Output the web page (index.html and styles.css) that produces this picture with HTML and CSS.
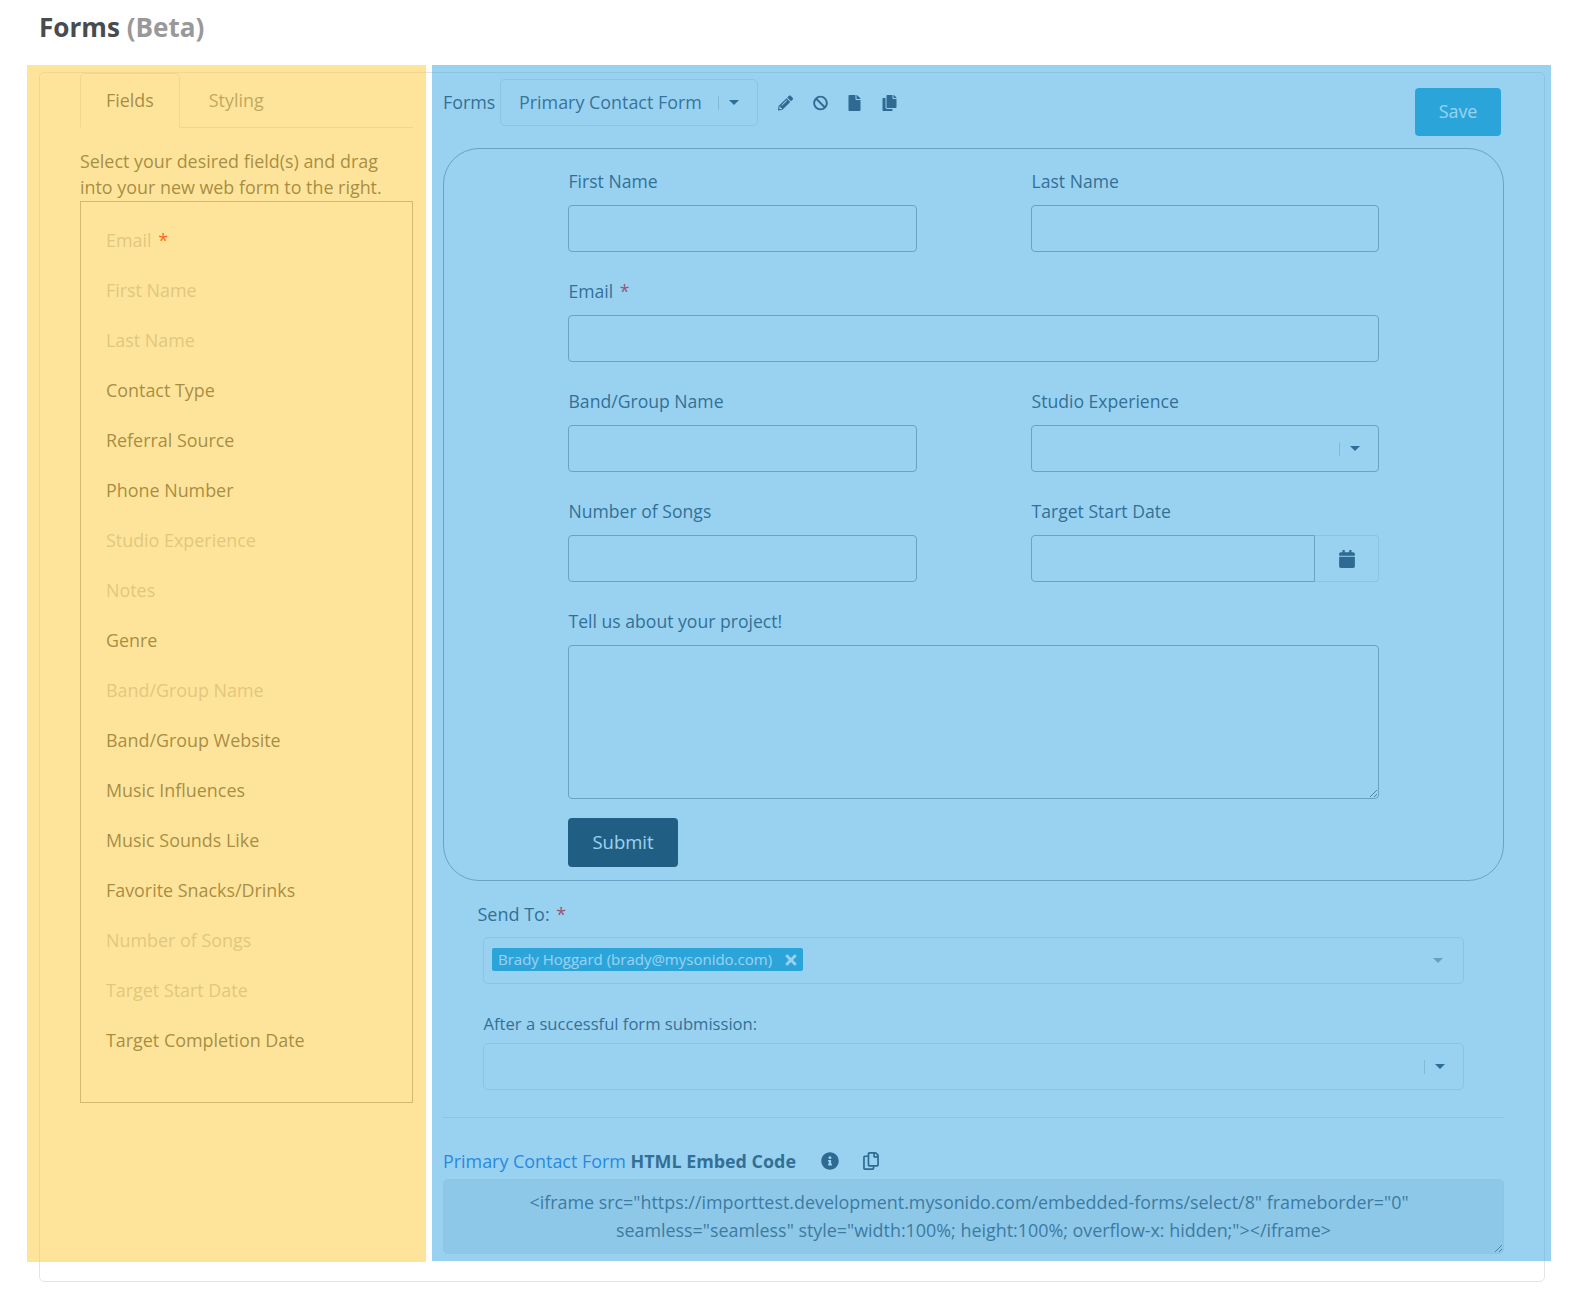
FILE: index.html
```html
<!DOCTYPE html>
<html lang="en">
<head>
<meta charset="utf-8">
<title>Forms (Beta)</title>
<link rel="stylesheet" href="styles.css">
</head>
<body>
<div class="page">
  <h1 class="title">Forms <span class="beta">(Beta)</span></h1>
  <div class="card">
    <aside class="side">
      <div class="tabs">
        <div class="tab active">Fields</div>
        <div class="tab">Styling</div>
      </div>
      <p class="hint">Select your desired field(s) and drag into your new web form to the right.</p>
      <ul class="fields">
        <li class="used">Email <span class="req">*</span></li>
        <li class="used">First Name</li>
        <li class="used">Last Name</li>
        <li>Contact Type</li>
        <li>Referral Source</li>
        <li>Phone Number</li>
        <li class="used">Studio Experience</li>
        <li class="used">Notes</li>
        <li>Genre</li>
        <li class="used">Band/Group Name</li>
        <li>Band/Group Website</li>
        <li>Music Influences</li>
        <li>Music Sounds Like</li>
        <li>Favorite Snacks/Drinks</li>
        <li class="used">Number of Songs</li>
        <li class="used">Target Start Date</li>
        <li>Target Completion Date</li>
      </ul>
    </aside>
    <main class="main">
      <div class="toolbar">
        <span class="toolbar-label">Forms</span>
        <div class="select form-picker">
          <span class="select-value">Primary Contact Form</span>
          <span class="select-sep"></span>
          <span class="caret"></span>
        </div>
        <div class="tools">
          <svg class="tool" viewBox="0 0 512 512"><path d="M497.9 142.1l-46.1 46.1c-4.7 4.7-12.3 4.7-17 0l-111-111c-4.7-4.7-4.7-12.3 0-17l46.1-46.1c18.7-18.7 49.1-18.7 67.9 0l60.1 60.1c18.8 18.7 18.8 49.1 0 67.9zM284.2 99.8L21.6 362.4.4 483.9c-2.9 16.4 11.4 30.6 27.8 27.8l121.5-21.3 262.6-262.6c4.7-4.7 4.7-12.3 0-17l-111-111c-4.8-4.7-12.4-4.7-17.1 0zM124.1 339.9c-5.5-5.5-5.5-14.3 0-19.8l154-154c5.5-5.5 14.3-5.5 19.8 0s5.5 14.3 0 19.8l-154 154c-5.5 5.5-14.3 5.5-19.8 0zM88 424h48v36.3l-64.5 11.3-31.1-31.1L51.7 376H88v48z"/></svg>
          <svg class="tool" viewBox="0 0 512 512"><path d="M256 8C119.034 8 8 119.033 8 256s111.034 248 248 248 248-111.034 248-248S392.967 8 256 8zm130.108 117.892c65.448 65.448 70 165.481 20.677 235.637L150.47 105.216c70.204-49.356 170.226-44.735 235.638 20.676zM125.892 386.108c-65.448-65.448-70-165.481-20.677-235.637L361.53 406.784c-70.203 49.356-170.226 44.736-235.638-20.676z"/></svg>
          <svg class="tool" viewBox="0 0 384 512"><path d="M224 136V0H24C10.7 0 0 10.7 0 24v464c0 13.3 10.7 24 24 24h336c13.3 0 24-10.7 24-24V160H248c-13.2 0-24-10.8-24-24zm160-14.1v6.1H256V0h6.1c6.4 0 12.5 2.5 17 7l97.9 98c4.5 4.5 7 10.6 7 16.9z"/></svg>
          <svg class="tool" viewBox="0 0 448 512"><path d="M320 448v40c0 13.255-10.745 24-24 24H24c-13.255 0-24-10.745-24-24V120c0-13.255 10.745-24 24-24h72v296c0 30.879 25.121 56 56 56h168zm0-344V0H152c-13.255 0-24 10.745-24 24v368c0 13.255 10.745 24 24 24h272c13.255 0 24-10.745 24-24V128H344c-13.2 0-24-10.8-24-24zm120.971-31.029L375.029 7.029A24 24 0 0 0 358.059 0H352v96h96v-6.059a24 24 0 0 0-7.029-16.97z"/></svg>
        </div>
        <button class="save" type="button">Save</button>
      </div>

      <div class="frame">
        <div class="form-grid">
          <div class="field">
            <label class="label">First Name</label>
            <input class="control" type="text">
          </div>
          <div class="field">
            <label class="label">Last Name</label>
            <input class="control" type="text">
          </div>
          <div class="field wide">
            <label class="label">Email <span class="req-dark">*</span></label>
            <input class="control" type="text">
          </div>
          <div class="field">
            <label class="label">Band/Group Name</label>
            <input class="control" type="text">
          </div>
          <div class="field">
            <label class="label">Studio Experience</label>
            <div class="select control-select">
              <span class="select-value"></span>
              <span class="select-sep"></span>
              <span class="caret"></span>
            </div>
          </div>
          <div class="field">
            <label class="label">Number of Songs</label>
            <input class="control" type="text">
          </div>
          <div class="field">
            <label class="label">Target Start Date</label>
            <div class="date">
              <input class="control date-input" type="text">
              <span class="addon">
                <svg class="calendar" viewBox="0 0 448 512"><path d="M12 192h424c6.6 0 12 5.4 12 12v260c0 26.5-21.5 48-48 48H48c-26.5 0-48-21.5-48-48V204c0-6.6 5.4-12 12-12zm436-44v-36c0-26.5-21.5-48-48-48h-48V12c0-6.6-5.4-12-12-12h-40c-6.6 0-12 5.4-12 12v52H160V12c0-6.6-5.4-12-12-12h-40c-6.6 0-12 5.4-12 12v52H48C21.5 64 0 85.5 0 112v36c0 6.6 5.4 12 12 12h424c6.6 0 12-5.4 12-12z"/></svg>
              </span>
            </div>
          </div>
          <div class="field wide">
            <label class="label">Tell us about your project!</label>
            <textarea class="control project"></textarea>
          </div>
        </div>
        <button class="submit" type="button">Submit</button>
      </div>

      <div class="send">
        <label class="label send-label">Send To: <span class="req-dark">*</span></label>
        <div class="select light tags">
          <span class="tag">Brady Hoggard (brady@mysonido.com)
            <svg class="tag-x" viewBox="0 0 352 512"><path d="M242.72 256l100.07-100.07c12.28-12.28 12.28-32.19 0-44.48l-22.24-22.24c-12.28-12.28-32.19-12.28-44.48 0L176 189.28 75.93 89.21c-12.28-12.28-32.19-12.28-44.48 0L9.21 111.45c-12.28 12.28-12.28 32.19 0 44.48L109.28 256 9.21 356.07c-12.28 12.28-12.28 32.19 0 44.48l22.24 22.24c12.28 12.28 32.2 12.28 44.48 0L176 322.72l100.07 100.07c12.28 12.28 32.2 12.28 44.48 0l22.24-22.24c12.28-12.28 12.28-32.19 0-44.48L242.72 256z"/></svg>
          </span>
          <span class="caret faint"></span>
        </div>
        <label class="after-label">After a successful form submission:</label>
        <div class="select light after">
          <span class="select-value"></span>
          <span class="select-sep"></span>
          <span class="caret"></span>
        </div>
      </div>

      <hr class="divider">

      <div class="embed-head">
        <span class="embed-title"><a class="embed-link">Primary Contact Form</a> <strong>HTML Embed Code</strong></span>
        <svg class="info" viewBox="0 0 512 512"><path d="M256 8C119.043 8 8 119.083 8 256c0 136.997 111.043 248 248 248s248-111.003 248-248C504 119.083 392.957 8 256 8zm0 110c23.196 0 42 18.804 42 42s-18.804 42-42 42-42-18.804-42-42 18.804-42 42-42zm56 254c0 6.627-5.373 12-12 12h-88c-6.627 0-12-5.373-12-12v-24c0-6.627 5.373-12 12-12h12v-64h-12c-6.627 0-12-5.373-12-12v-24c0-6.627 5.373-12 12-12h64c6.627 0 12 5.373 12 12v100h12c6.627 0 12 5.373 12 12v24z"/></svg>
        <svg class="copy" viewBox="0 0 448 512"><path d="M433.941 65.941l-51.882-51.882A48 48 0 0 0 348.118 0H176c-26.51 0-48 21.49-48 48v48H48c-26.51 0-48 21.49-48 48v320c0 26.51 21.49 48 48 48h224c26.51 0 48-21.49 48-48v-48h80c26.51 0 48-21.49 48-48V99.882a48 48 0 0 0-14.059-33.941zM266 464H54a6 6 0 0 1-6-6V150a6 6 0 0 1 6-6h74v224c0 26.51 21.49 48 48 48h96v42a6 6 0 0 1-6 6zm128-96H182a6 6 0 0 1-6-6V54a6 6 0 0 1 6-6h106v88c0 13.255 10.745 24 24 24h88v202a6 6 0 0 1-6 6zm6-256h-64V48h9.632c1.591 0 3.117.632 4.243 1.757l48.368 48.368a6 6 0 0 1 1.757 4.243V112z"/></svg>
      </div>
      <textarea class="embed-code" readonly>&lt;iframe src="https://importtest.development.mysonido.com/embedded-forms/select/8" frameborder="0" seamless="seamless" style="width:100%; height:100%; overflow-x: hidden;"&gt;&lt;/iframe&gt;</textarea>
    </main>
  </div>
  <div class="overlay overlay-yellow"></div>
  <div class="overlay overlay-blue"></div>
</div>
</body>
</html>
```

FILE: styles.css
```css
* { box-sizing: border-box; }
html, body { margin: 0; padding: 0; background: #fff; }
body {
  font-family: "Open Sans", "Liberation Sans", sans-serif;
  font-size: 17.9px;
  line-height: 26px;
  color: #333a44;
}
.page { position: relative; width: 1580px; height: 1295px; padding: 9px 35px 0 39px; }
.title { margin: 0; height: 36px; font-size: 26.1px; line-height: 36px; font-weight: 700; color: #484b50; }
.beta { color: #999; }

.card {
  display: flex;
  gap: 30px;
  margin-top: 27px;
  height: 1210px;
  padding: 0 40px;
  border: 1px solid #e4e4e4;
  border-radius: 5px;
}

.side { width: 333px; flex: none; }
.tabs { display: flex; height: 55px; border-bottom: 1px solid #e4e4e4; }
.tab { height: 55px; padding: 1px 26px 0 28px; line-height: 53px; color: #858585; }
.tab.active {
  padding: 0 25px;
  color: #505050;
  background: #fff;
  border: 1px solid #e4e4e4;
  border-bottom-color: #fff;
  border-radius: 5px 5px 0 0;
  margin-right: 1px;
}
.hint { margin: 20px 0 1px; color: #505050; }
.fields {
  list-style: none;
  margin: 0;
  padding: 13px 0 37px 25px;
  height: 902px;
  border: 1px solid #a8a8a8;
  color: #505050;
}
.fields li { height: 50px; line-height: 50px; }
.fields .used { color: #c4c4c4; }
.req { color: #f00; margin-left: 2px; }
.req-dark { color: #f00; margin-left: 2px; }

.main { width: 1062px; flex: none; }
.toolbar { display: flex; align-items: flex-start; height: 75px; padding-top: 6px; }
.toolbar-label { width: 57px; flex: none; padding: 10px 0 0; color: #333a44; }
.select {
  display: flex;
  align-items: center;
  height: 47px;
  border: 1px solid #a0a0a4;
  border-radius: 5px;
}
.select-value { flex: 1; }
.select-sep { width: 1px; height: 14px; background: #ccc; margin-right: 10px; }
.caret {
  width: 0;
  height: 0;
  border-left: 5px solid transparent;
  border-right: 5px solid transparent;
  border-top: 5px solid #22384a;
  margin-right: 18px;
}
.caret.faint { border-top-color: #8ba1b0; margin: 0 20px 0 auto; }
.form-picker { width: 258px; padding-left: 18px; border-color: #dee2e6; color: #3c434d; }
.form-picker .select-value { margin-top: -2px; }
.form-picker .caret { margin-right: 18px; }
.tools { display: flex; gap: 19.5px; align-items: center; height: 47px; margin-left: 20px; }
.tool { display: block; height: 16px; width: 15px; fill: #283040; }
.save {
  margin: 9px 4px 0 auto;
  width: 86px;
  height: 48px;
  padding: 0 0 2px;
  border: 0;
  border-radius: 4px;
  background: #22a5cf;
  color: #ffffff;
  font: inherit;
}

.frame {
  width: 1061px;
  height: 733px;
  padding: 19px 124px 0;
  border: 1px solid #a0a0a4;
  border-radius: 36px;
}
.form-grid { display: grid; grid-template-columns: 349px 348px; column-gap: 114px; row-gap: 26px; }
.field { min-width: 0; }
.wide { grid-column: 1 / -1; }
.label { display: block; height: 26px; margin-bottom: 11px; padding-left: 0.5px; font-size: 17.6px; line-height: 26px; color: #333a44; }
.control {
  display: block;
  width: 100%;
  height: 47px;
  padding: 0 12px;
  border: 1px solid #a0a0a4;
  border-radius: 4px;
  background: #fff;
  font: inherit;
  color: inherit;
  outline: none;
}
.control-select { border-radius: 4px; }
.date { display: flex; }
.date-input { flex: 1; border-radius: 4px 0 0 4px; }
.addon {
  display: flex;
  align-items: center;
  justify-content: center;
  width: 64px;
  flex: none;
  height: 47px;
  border: 1px solid #dee2e6;
  border-left: 0;
  border-radius: 0 4px 4px 0;
}
.calendar { width: 16px; height: 18px; fill: #283040; }
.project { height: 154px; resize: vertical; }
.submit {
  display: block;
  width: 110px;
  height: 49px;
  margin-top: 19px;
  padding: 0 0 2px;
  border: 0;
  border-radius: 4px;
  background: #0d1b22;
  color: #fff;
  font: inherit;
  font-size: 18.5px;
}

.send { padding: 20px 40px 0; }
.send-label { margin: 0 0 10px -6px; font-size: 18px; }
.light { border-color: #dee2e6; }
.tags { width: 981px; align-items: flex-start; padding: 10px 0 0 8px; position: relative; }
.tag {
  display: flex;
  align-items: center;
  gap: 12px;
  height: 23px;
  padding: 0 6px 0 6px;
  border-radius: 2px;
  background: #22a5cf;
  color: #fff;
  font-size: 15px;
  line-height: 23px;
  white-space: nowrap;
}
.tag-x { width: 12px; height: 16px; fill: #fff; margin-left: 1px; }
.tags .caret { align-self: center; margin-top: -10px; margin-right: 20px; }
.after-label { display: block; margin-top: 26px; height: 22px; padding-left: 0.5px; font-size: 16.6px; line-height: 27px; color: #333a44; }
.after { width: 981px; margin-top: 11px; padding-right: 0; }
.after .select-sep { margin-right: 10px; }
.after .caret { margin-right: 18px; }

.divider { margin: 27px 0 0; border: 0; border-top: 1px solid #e4e4e4; width: 1061px; }
.embed-head { display: flex; align-items: center; height: 61px; padding: 24px 0 0; }
.embed-title { color: #333a44; width: 378px; flex: none; white-space: nowrap; }
.embed-link { color: #1a6dd6; }
.info { width: 18px; height: 18px; fill: #283040; }
.copy { width: 16px; height: 18px; margin-left: 24px; fill: #283040; }
.embed-code {
  display: block;
  width: 1061px;
  height: 75px;
  padding: 8px 12px;
  border: 1px solid #e2e6ea;
  border-radius: 5px;
  background: #e9ecef;
  font: inherit;
  line-height: 28px;
  text-align: center;
  text-indent: -9px;
  color: #46505c;
  outline: none;
  resize: vertical;
  overflow: hidden;
}

.overlay { position: absolute; top: 65px; pointer-events: none; }
.overlay-yellow { left: 27px; width: 399px; height: 1197px; background: rgba(254, 202, 55, 0.5); }
.overlay-blue { left: 432px; width: 1119px; height: 1196px; background: rgba(51, 163, 227, 0.5); }
```
